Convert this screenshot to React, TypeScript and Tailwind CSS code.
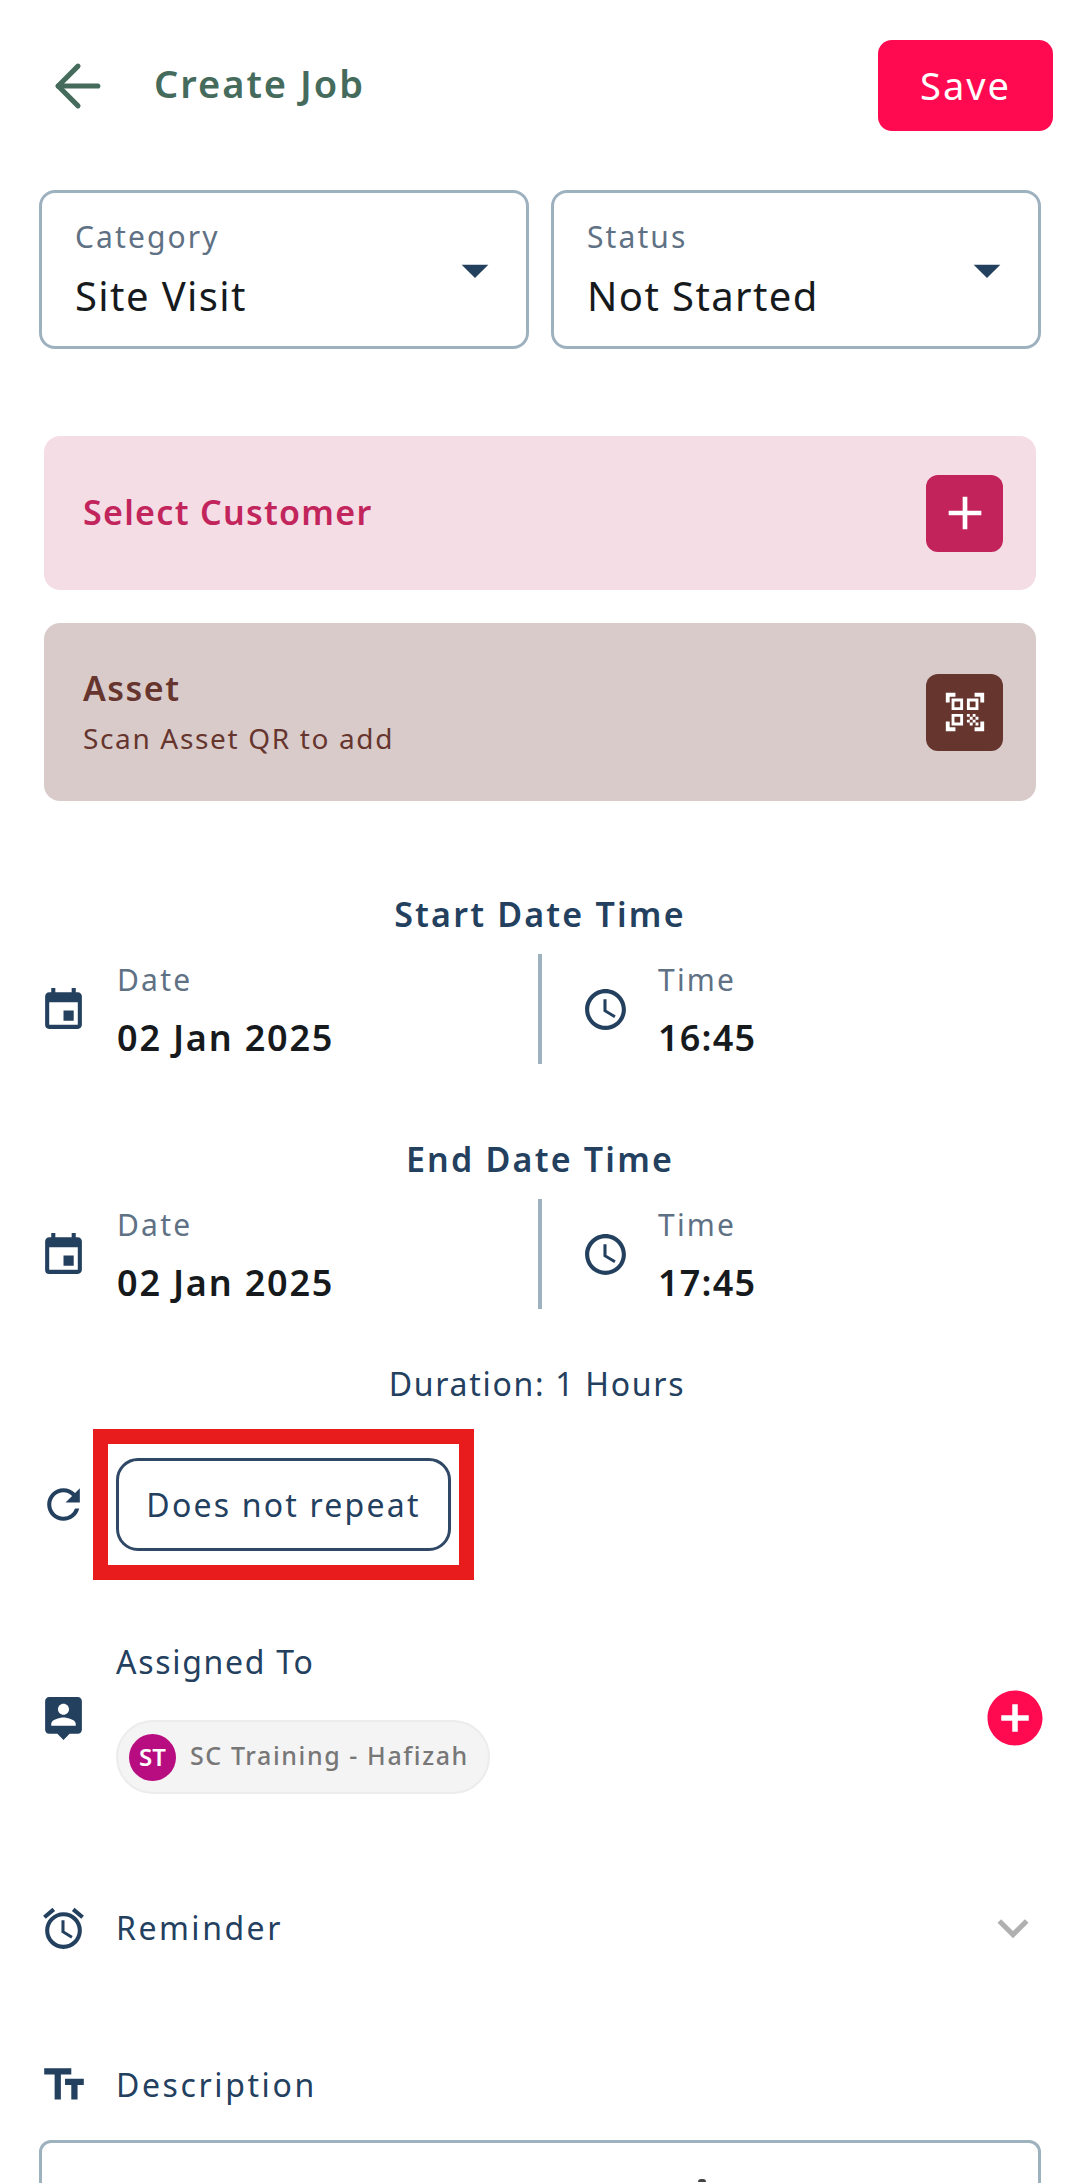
import { ArrowLeft } from 'lucide-react';
import {
  MdAccessAlarm,
  MdAccessTime,
  MdAdd,
  MdAddCircle,
  MdArrowDropDown,
  MdEvent,
  MdKeyboardArrowDown,
  MdQrCodeScanner,
  MdRefresh,
  MdTextFields,
} from 'react-icons/md';

const font = { fontFamily: '"Noto Sans", sans-serif' };

function Select({ label, value }: { label: string; value: string }) {
  return (
    <div className="relative h-[159px] flex-1 rounded-[16px] border-[3px] border-[#9db1bf] pl-[33px] pt-[24px]">
      <div className="text-[30px] leading-[40px] tracking-[2.1px] text-[#5f7184]">{label}</div>
      <div className="mt-[16px] text-[40px] leading-[46px] tracking-[1.4px] text-[#161a1d]">{value}</div>
      <MdArrowDropDown className="absolute right-[19px] top-[45px] text-[#24405f]" size={64} />
    </div>
  );
}

function DateTime({ title, time }: { title: string; time: string }) {
  return (
    <div>
      <div className="text-center text-[34px] font-semibold leading-[44px] tracking-[2.2px] text-[#24405f]">{title}</div>
      <div className="mt-[18px] flex h-[110px] pl-[39px]">
        <div className="flex w-[499px] items-center">
          <MdEvent className="mt-[2px] text-[#24405f]" size={49} />
          <div className="ml-[29px]">
            <div className="mt-[2px] text-[30px] leading-[40px] tracking-[2.2px] text-[#5f7184]">Date</div>
            <div className="mt-[15px] text-[36px] font-semibold leading-[46px] tracking-[1.8px] text-[#161a1d]">02 Jan 2025</div>
          </div>
        </div>
        <div className="w-[4px] bg-[#9db1bf]" />
        <div className="flex flex-1 items-center pl-[39px]">
          <MdAccessTime className="mt-[1px] text-[#24405f]" size={49} />
          <div className="ml-[28px]">
            <div className="mt-[2px] text-[30px] leading-[40px] tracking-[2.2px] text-[#5f7184]">Time</div>
            <div className="mt-[15px] text-[36px] font-semibold leading-[46px] tracking-[1.2px] text-[#161a1d]">{time}</div>
          </div>
        </div>
      </div>
    </div>
  );
}

export default function App() {
  return (
    <div className="h-[2183px] w-[1080px] overflow-hidden bg-white" style={font}>
      <div className="flex items-start pl-[44px] pr-[27px] pt-[40px]">
        <ArrowLeft className="mt-[12px] text-[#456b5c]" size={68} strokeWidth={1.8} />
        <div className="ml-[42px] mt-[19px] text-[38px] font-semibold leading-[48px] tracking-[2px] text-[#456b5c]">Create Job</div>
        <button className="ml-auto h-[91px] w-[175px] rounded-[14px] bg-[#ff0a50] text-[38px] tracking-[2px] text-white">Save</button>
      </div>

      <div className="mt-[59px] flex gap-[22px] pl-[39px] pr-[39px]">
        <Select label="Category" value="Site Visit" />
        <Select label="Status" value="Not Started" />
      </div>

      <div className="mx-[44px] mt-[87px] flex h-[154px] items-center justify-between rounded-[16px] bg-[#f5dde6] pl-[39px] pr-[33px]">
        <div className="mt-[-2px] text-[34px] font-semibold tracking-[1.3px] text-[#c2255c]">Select Customer</div>
        <div className="flex h-[77px] w-[77px] items-center justify-center rounded-[12px] bg-[#c2235a]">
          <MdAdd className="text-white" size={56} />
        </div>
      </div>

      <div className="mx-[44px] mt-[33px] flex h-[178px] items-center justify-between rounded-[16px] bg-[#dacbcb] pl-[39px] pr-[33px]">
        <div className="mt-[-2px]">
          <div className="text-[34px] font-semibold leading-[44px] tracking-[1.5px] text-[#66362e]">Asset</div>
          <div className="mt-[9px] text-[28px] leading-[38px] tracking-[1.65px] text-[#66362e]">Scan Asset QR to add</div>
        </div>
        <div className="flex h-[77px] w-[77px] items-center justify-center rounded-[12px] bg-[#66362e]">
          <MdQrCodeScanner className="text-white" size={46} />
        </div>
      </div>

      <div className="mt-[91px]">
        <DateTime title="Start Date Time" time="16:45" />
      </div>
      <div className="mt-[73px]">
        <DateTime title="End Date Time" time="17:45" />
      </div>

      <div className="mt-[54px] pr-[6px] text-center text-[32px] leading-[42px] tracking-[1.7px] text-[#24405f]">Duration: 1 Hours</div>

      <div className="mt-[24px] flex items-center pl-[39px]">
        <MdRefresh className="text-[#24405f]" size={49} />
        <div className="ml-[5px] border-[15px] border-[#e81c1c] px-[8px] py-[14px]">
          <div className="flex h-[93px] w-[335px] items-center justify-center rounded-[22px] border-[3px] border-[#2f4866] text-[32px] tracking-[2.2px] text-[#24405f]">
            Does not repeat
          </div>
        </div>
      </div>

      <div className="mt-[61px] flex items-center pl-[39px] pr-[32px]">
        <svg className="text-[#24405f]" width={49} height={49} viewBox="0 0 24 24" fill="currentColor">
          <path d="M19 2H5c-1.11 0-2 .9-2 2v14c0 1.1.89 2 2 2h4l3 3 3-3h4c1.1 0 2-.9 2-2V4c0-1.1-.9-2-2-2zm-7 3.3c1.49 0 2.7 1.21 2.7 2.7 0 1.49-1.21 2.7-2.7 2.7-1.49 0-2.7-1.21-2.7-2.7 0-1.49 1.21-2.7 2.7-2.7zM18 16H6v-.9c0-2 4-3.1 6-3.1s6 1.1 6 3.1v.9z" />
        </svg>
        <div className="ml-[28px] flex-1">
          <div className="text-[32px] leading-[42px] tracking-[1.7px] text-[#24405f]">Assigned To</div>
          <div className="mt-[37px] flex h-[74px] w-[374px] items-center rounded-full border-[2px] border-[#ececec] bg-[#f4f4f4] pl-[11px]">
            <div className="flex h-[47px] w-[47px] items-center justify-center rounded-full bg-[#b80d80] text-[24px] font-semibold text-white">
              ST
            </div>
            <div className="ml-[14px] mt-[-2px] text-[25px] font-medium tracking-[1.6px] text-[#777777]">SC Training - Hafizah</div>
          </div>
        </div>
        <MdAddCircle className="ml-[-2px] mt-[1px] text-[#ff0a50]" size={66} />
      </div>

      <div className="mt-[103px] flex items-center pl-[39px] pr-[36px]">
        <MdAccessAlarm className="text-[#24405f]" size={49} />
        <div className="ml-[28px] flex-1 text-[32px] leading-[42px] tracking-[2.5px] text-[#24405f]">Reminder</div>
        <MdKeyboardArrowDown className="text-[#b0b0b0]" size={62} />
      </div>

      <div className="mt-[101px] flex items-center pl-[39px]">
        <MdTextFields className="text-[#24405f]" size={50} />
        <div className="ml-[27px] text-[32px] leading-[42px] tracking-[2.6px] text-[#24405f]">Description</div>
      </div>

      <div className="relative mx-[39px] mt-[30px] h-[200px] rounded-[12px] border-[3px] border-[#9db1bf]">
        <span className="absolute left-[656px] top-[36px] h-[3px] w-[8px] rounded-t-full bg-[#444444]" />
      </div>
    </div>
  );
}
